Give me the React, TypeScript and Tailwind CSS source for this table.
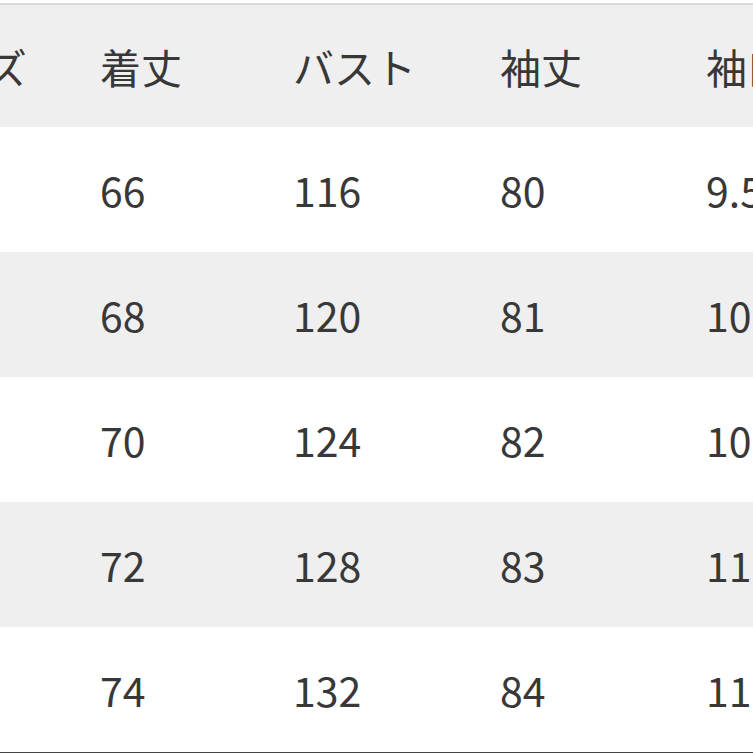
const font = { fontFamily: '"Noto Sans CJK JP", "Noto Sans", sans-serif' }

const header = ['サイズ', '着丈', 'バスト', '袖丈', '袖口']
const rows = [
  ['S', '66', '116', '80', '9.5'],
  ['M', '68', '120', '81', '10'],
  ['L', '70', '124', '82', '10.5'],
  ['XL', '72', '128', '83', '11'],
  ['XXL', '74', '132', '84', '11.5'],
]

const widths = ['w-[195px]', 'w-[193px]', 'w-[207px]', 'w-[206px]', 'w-[200px]']

function Row({ cells, gray, h }: { cells: string[]; gray: boolean; h: string }) {
  return (
    <div className={`flex items-center ${h} ${gray ? 'bg-[#efefef]' : 'bg-white'}`}>
      <div className="flex -ml-[95px]">
        {cells.map((c, i) => (
          <div key={i} className={`${widths[i]} shrink-0 whitespace-nowrap`}>
            {c}
          </div>
        ))}
      </div>
    </div>
  )
}

export default function App() {
  return (
    <div className="w-[753px] h-[753px] overflow-hidden bg-white text-[#383838] text-[41px] leading-none" style={font}>
      <div className="h-[3px] bg-white" />
      <div className="h-[2px] bg-[#dadada]" />
      <Row cells={header} gray h="h-[122px]" />
      {rows.map((r, i) => (
        <Row key={i} cells={r} gray={i % 2 === 1} h="h-[125px]" />
      ))}
      <div className="h-[3px] bg-[#444444]" />
    </div>
  )
}
